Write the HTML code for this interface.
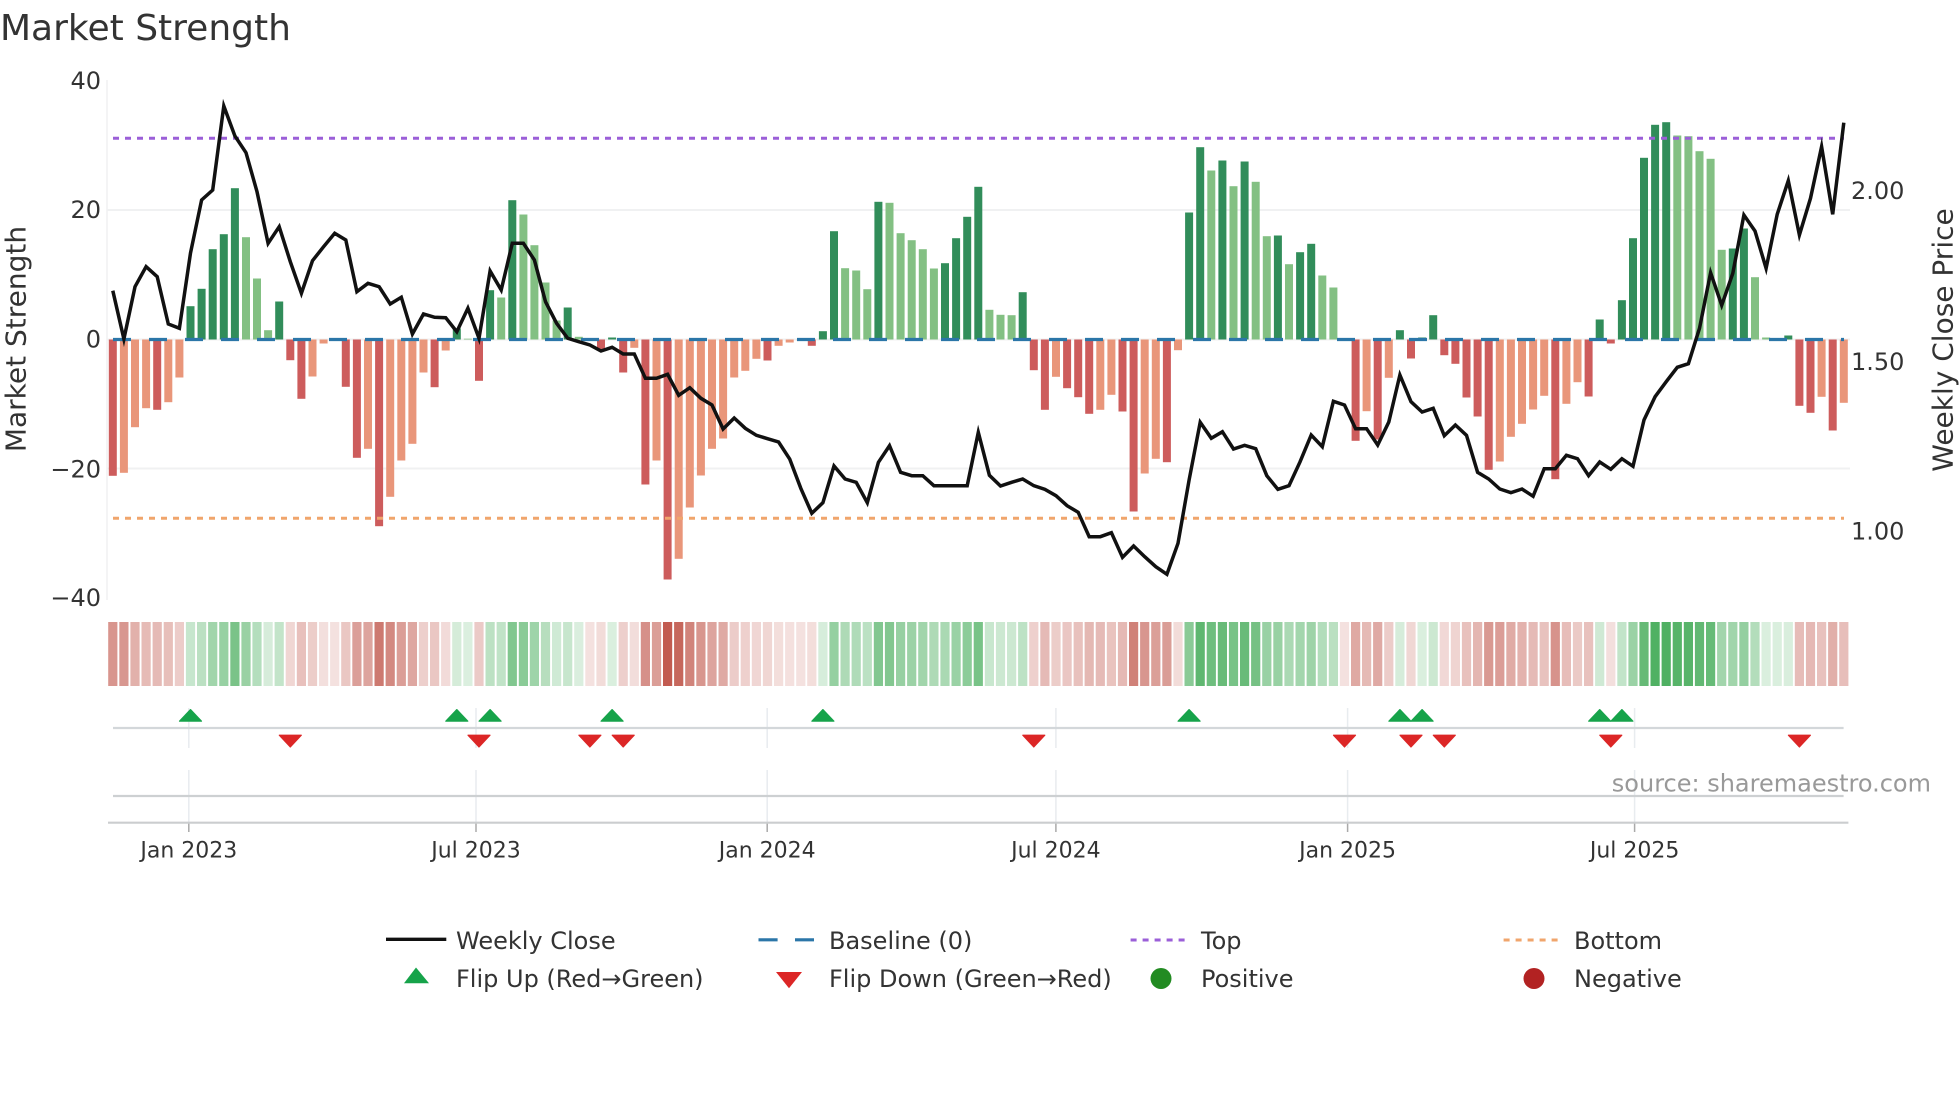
<!DOCTYPE html>
<html lang="en">
<head>
<meta charset="utf-8">
<title>Market Strength</title>
<style>
html,body{margin:0;padding:0;background:#fff;width:1960px;height:1102px;overflow:hidden}
svg{display:block}
text{font-family:"DejaVu Sans","Liberation Sans",sans-serif;fill:#333}
</style>
</head>
<body>
<svg id="c" xmlns="http://www.w3.org/2000/svg" width="1960" height="1102" viewBox="0 0 1960 1102">
<rect width="1960" height="1102" fill="#fff"/>
<g fill="none" stroke="#f0f1f2" stroke-width="2">
<path d="M107 210H1850M107 339.5H1850M107 468.5H1850"/>
<path d="M107 80V600" stroke-width="1.5"/>
</g>
<g id="bars"></g>
<path d="M113 339.5H1844" fill="none" stroke="#2b76a8" stroke-width="3.2" stroke-dasharray="18 18"/>
<path d="M113 138.3H1844" fill="none" stroke="#9b5fd8" stroke-width="3" stroke-dasharray="6 6"/>
<path d="M113 518.3H1844" fill="none" stroke="#f0a56c" stroke-width="3" stroke-dasharray="6 6"/>
<g id="line"></g>
<g id="heat"></g>
<g id="panel"></g>
<path d="M108 822.7H1848.4" stroke="#cbcdcf" stroke-width="2.2"/>
<path d="M113 728H1843.6" stroke="#d3d7da" stroke-width="2.2"/>
<path d="M113 796H1843.6" stroke="#cdd0d2" stroke-width="2.2"/>
<g id="tri"></g>

<text x="0" y="40" font-size="36">Market Strength</text>
<g font-size="24" text-anchor="end">
<text x="101" y="89">40</text>
<text x="101" y="218">20</text>
<text x="101" y="347.5">0</text>
<text x="101" y="477.5">−20</text>
<text x="101" y="606">−40</text>
</g>
<g font-size="24">
<text x="1851" y="199">2.00</text>
<text x="1851" y="370">1.50</text>
<text x="1851" y="539.3">1.00</text>
</g>
<text transform="translate(25.5 339) rotate(-90)" text-anchor="middle" font-size="28">Market Strength</text>
<text transform="translate(1952.5 340) rotate(-90)" text-anchor="middle" font-size="28">Weekly Close Price</text>
<g font-size="22" text-anchor="middle">
<text x="188.8" y="857.7">Jan 2023</text>
<text x="476" y="857.7">Jul 2023</text>
<text x="767.2" y="857.7">Jan 2024</text>
<text x="1055.9" y="857.7">Jul 2024</text>
<text x="1347.6" y="857.7">Jan 2025</text>
<text x="1634.6" y="857.7">Jul 2025</text>
</g>
<text x="1931" y="791.7" text-anchor="end" font-size="24" style="fill:#999">source: sharemaestro.com</text>

<path d="M386 939.3H446.3" stroke="#111" stroke-width="3.4"/>
<path d="M758.5 939.8H777.6M795 939.8H814" stroke="#2b76a8" stroke-width="3.2"/>
<path d="M1130.6 940H1187" stroke="#9b5fd8" stroke-width="3" stroke-dasharray="6 6"/>
<path d="M1503.6 940H1560" stroke="#f0a56c" stroke-width="3" stroke-dasharray="6 6"/>
<path d="M404 983.3L416 967.5L429 983.3Z" fill="#16a34a"/>
<path d="M776 972L802 972L789 988.3Z" fill="#dc2626"/>
<circle cx="1161" cy="978.5" r="10.5" fill="#228b22"/>
<circle cx="1534" cy="978.5" r="10.5" fill="#b22222"/>
<g font-size="24">
<text x="456" y="949">Weekly Close</text>
<text x="829" y="949">Baseline (0)</text>
<text x="1201" y="949">Top</text>
<text x="1574" y="949">Bottom</text>
<text x="456" y="987">Flip Up (Red→Green)</text>
<text x="829" y="987">Flip Down (Green→Red)</text>
<text x="1201" y="987">Positive</text>
<text x="1574" y="987">Negative</text>
</g>
</svg>
<script>
var V=[-136.3,-133.3,-87.7,-68.7,-70.3,-62.7,-38,33.3,50.7,90.3,105.3,151.3,102.3,61,9.3,38,-20.7,-59.3,-37,-4,-.8,-47.3,-118.3,-109.3,-186.7,-157.3,-121,-104.3,-33,-47.7,-11,11,.8,-41.3,49.3,42,139.3,125,94.3,57,19,32,2.7,-.6,-10.7,2,-33,-8.3,-145,-121,-240,-219.3,-168,-136,-109.3,-99,-38,-31.3,-19.3,-21,-6.3,-3,-1,-6.3,8.3,108.3,71.3,69,50.3,137.7,136.7,106.3,99.3,90.3,71,76.3,101.3,122.7,152.7,29.7,24.7,24.3,47.3,-30.7,-70.3,-37.3,-48.7,-57.7,-74.3,-70.3,-55.3,-72,-172,-134,-119.3,-122.7,-10.7,127,192.3,169,179,153.3,178,157.7,103.3,104,75.3,87.3,95.7,64,52,-.6,-101.3,-71.7,-100,-38.3,9.3,-19,2,24.3,-15.7,-24.3,-58,-77,-130.3,-122,-97.3,-84.3,-70,-56.3,-139.7,-64.3,-42.7,-57,20,-4,39.3,101.3,181.7,214.7,217.3,204,203.3,188.3,180.7,89.7,91,111,62.3,2,1.5,4,-66.3,-73.3,-57.3,-91,-63.3];
var L=[290.7,339,286.7,266.7,276.7,324,328.3,253,200,190,106,136,152.7,191.7,243.3,226.7,261.7,293.3,260.7,246.7,233.3,240,291.7,283.3,286.7,304,297.3,334,314,317.3,317.7,331.7,308.3,338.3,271,290,243.3,243.3,260,301.7,323.3,338.3,341.7,345,351,347.3,354,354,378.3,378.3,374.3,395.3,387.7,398.3,405,429,418,428.3,435.3,438.7,442,459,488.3,513.3,502.7,466,479,482.3,502.7,462.3,445.7,472.3,475.7,475.7,485.7,485.7,485.7,485.7,432.3,475.3,486,482.3,479,485.7,489.3,495.7,505.7,512.3,536.7,536.7,532.7,557.3,546,556.7,566.7,574.3,543.3,480,422.3,438.3,431.7,449,445.3,448.7,475.7,489.3,485.7,461.7,435,446.7,401.3,405,428.7,428.7,445,422,375,401.7,412,408.3,435.7,425,435.3,472.3,479,489,492.7,489,496.3,468.7,468.7,455.3,458.7,475.7,462,469.3,458.7,466.3,420,396.7,381.7,367.3,363.7,328.3,272.7,305.3,273.3,215,231,268.3,214.3,180.7,235,198.3,146.7,214.3,122.7];
var X0=112.8,DX=11.096,Y0=339.5;
function x(i){return X0+DX*i}
function f(n){return n.toFixed(1)}
var bars='',heat='';
for(var i=0;i<V.length;i++){
  var v=V[i],p=i?V[i-1]:null,a=Math.abs(v);
  var dark=(p===null)||(p*v<0)||a>=Math.abs(p);
  var col=v>0?(dark?'#318d5a':'#83c083'):(dark?'#cd5c5c':'#e9967a');
  var cx=x(i);
  if(v>0)bars+='<rect x="'+f(cx-4)+'" y="'+f(Y0-a)+'" width="8" height="'+f(a)+'" fill="'+col+'"/>';
  else bars+='<rect x="'+f(cx-4)+'" y="'+f(Y0)+'" width="8" height="'+f(a)+'" fill="'+col+'"/>';
  var al=v>0?(.2+.8*a/217):(.18+.82*a/240);
  heat+='<rect x="'+f(cx-4.6)+'" y="622" width="9.2" height="64" fill="'+(v>0?'#4fb062':'#c25b50')+'" fill-opacity="'+al.toFixed(3)+'"/>';
}
document.getElementById('bars').innerHTML=bars;
document.getElementById('heat').innerHTML=heat;
var d='';
for(i=0;i<L.length;i++){d+=(i?'L':'M')+f(x(i))+' '+L[i]}
document.getElementById('line').innerHTML='<path d="'+d+'" fill="none" stroke="#111" stroke-width="3.5" stroke-linejoin="miter" stroke-miterlimit="6"/>';
var ticks=[188.8,476,767.2,1055.9,1347.6,1634.6],pn='';
for(i=0;i<ticks.length;i++){
  pn+='<path d="M'+ticks[i]+' 708V748M'+ticks[i]+' 770V822" stroke="#e8ecef" stroke-width="1.5"/>';
  pn+='<path d="M'+ticks[i]+' 823V832" stroke="#aaa" stroke-width="1.5"/>';
}
document.getElementById('panel').innerHTML=pn;
var up=[7,31,34,45,64,97,116,118,134,136],dn=[16,33,43,46,83,111,117,120,135,152],t='';
for(i=0;i<up.length;i++){var c=x(up[i]);t+='<path d="M'+f(c-11)+' 721.2L'+f(c)+' 709.6L'+f(c+11)+' 721.2Z" fill="#16a34a" stroke="#16a34a" stroke-width="1.2" stroke-linejoin="round"/>';}
for(i=0;i<dn.length;i++){var c=x(dn[i]);t+='<path d="M'+f(c-11)+' 735.2L'+f(c+11)+' 735.2L'+f(c)+' 747Z" fill="#dc2626" stroke="#dc2626" stroke-width="1.2" stroke-linejoin="round"/>';}
document.getElementById('tri').innerHTML=t;
</script>
</body>
</html>
